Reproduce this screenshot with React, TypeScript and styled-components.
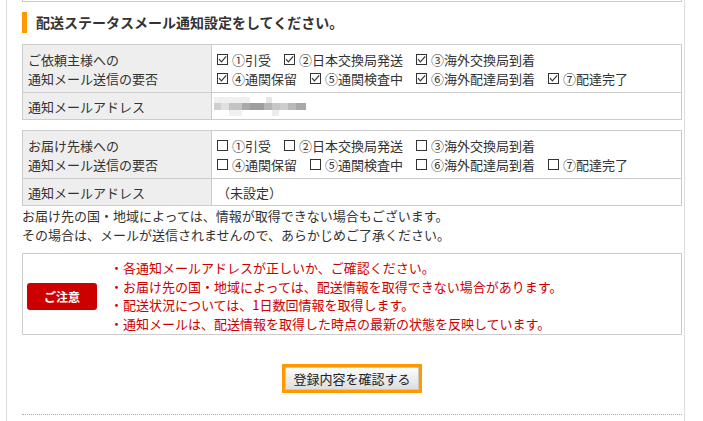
import React from 'react';
import styled, { createGlobalStyle } from 'styled-components';

const GlobalStyle = createGlobalStyle`
  *, *::before, *::after {
    box-sizing: border-box;
  }
  body {
    margin: 0;
    background: #fff;
    color: #333;
    font-family: "Noto Sans CJK JP", "Noto Sans", sans-serif;
    font-size: 13px;
  }
`;

const Page = styled.div`
  margin-left: 6px;
  width: 679px;
  min-height: 421px;
  padding: 0 2px 0 15px;
  border-left: 1px solid #ddd;
  border-right: 1px solid #ddd;
`;

const PrevBox = styled.div`
  height: 2px;
  border: 1px solid #ccc;
  border-top: none;
`;

const Heading = styled.h2`
  margin: 10px 0 11px;
  padding-left: 9px;
  border-left: 5px solid #f90;
  font-size: 14px;
  line-height: 21px;
  font-weight: bold;
  color: #333;
`;

const Table = styled.table`
  width: 100%;
  border-collapse: collapse;
  table-layout: fixed;
  & + & {
    margin-top: 10px;
  }
`;

const Th = styled.th<{ $tight?: boolean }>`
  width: 189px;
  background: #eee;
  border: 1px solid #ccc;
  text-align: left;
  font-weight: normal;
  line-height: 19px;
  padding: ${(p) => (p.$tight ? '4px 5px 3px' : '5px 5px 4px')};
  vertical-align: middle;
`;

const Td = styled.td<{ $tight?: boolean }>`
  border: 1px solid #ccc;
  line-height: 19px;
  padding: ${(p) => (p.$tight ? '4px 5px 3px' : '5px 5px 4px')};
  vertical-align: middle;
`;

const CheckLine = styled.div`
  display: flex;
  line-height: 19px;
  white-space: nowrap;
`;

const CheckItem = styled.span`
  display: inline-flex;
  align-items: center;
  margin-right: 13px;

  svg {
    margin-right: 4px;
    flex-shrink: 0;
  }
`;

const Mosaic = styled.svg`
  display: block;
  margin-left: -3px;
`;

const Notes = styled.p`
  margin: 0;
  line-height: 19px;
`;

const Caution = styled.div`
  margin-top: 9px;
  border: 1px solid #ccc;
  display: flex;
  align-items: center;
  padding: 5px 4px 1px;
`;

const Badge = styled.span`
  width: 70px;
  height: 27px;
  flex-shrink: 0;
  margin-right: 13px;
  border-radius: 3px;
  background: #c00;
  color: #fff;
  font-size: 12px;
  font-weight: bold;
  display: flex;
  align-items: center;
  justify-content: center;
`;

const CautionList = styled.ul`
  margin: 0;
  padding: 0;
  list-style: none;
  color: #c00;
  line-height: 18.6px;
`;

const ButtonRow = styled.div`
  margin-top: 29px;
  display: flex;
  justify-content: center;
`;

const ConfirmButton = styled.button`
  height: 29px;
  padding: 0 8px;
  border: 3px solid #f90;
  background: linear-gradient(#fff, #dcdcdc);
  box-shadow: inset 0 0 0 1px #c8c8c8;
  font-family: inherit;
  font-size: 13px;
  color: #222;
  cursor: pointer;
`;

const Dotted = styled.div`
  margin-top: 21px;
  border-top: 1px dotted #aaa;
`;

const Box = ({ checked }: { checked: boolean }) => (
  <svg width="11" height="11" viewBox="0 0 11 11">
    <rect x="0.5" y="0.5" width="10" height="10" fill="#fff" stroke="#333" />
    {checked && <path d="M2 5.2 L4.4 7.8 L9.2 2.4" fill="none" stroke="#333" strokeWidth="1.2" />}
  </svg>
);

const lines = [
  ['①引受', '②日本交換局発送', '③海外交換局到着'],
  ['④通関保留', '⑤通関検査中', '⑥海外配達局到着', '⑦配達完了'],
];

const Checks = ({ checked }: { checked: boolean }) => (
  <>
    {lines.map((line, i) => (
      <CheckLine key={i}>
        {line.map((label) => (
          <CheckItem key={label}>
            <Box checked={checked} />
            {label}
          </CheckItem>
        ))}
      </CheckLine>
    ))}
  </>
);

// blurred address, drawn as a mosaic
const tiles: [number, number, number, string][] = [
  [0, 0, 36, '#efefef'], [52, 0, 6, '#e6e6e6'],
  [0, 6, 7, '#cfcfcf'], [7, 6, 8, '#e0e0e0'], [15, 6, 13, '#c4c4c4'], [28, 6, 8, '#a9a9a9'],
  [36, 6, 14, '#9e9e9e'], [50, 6, 8, '#b5b5b5'], [58, 6, 8, '#c6c6c6'], [66, 6, 8, '#cdcdcd'],
  [74, 6, 8, '#b9b9b9'], [82, 6, 10, '#a8a8a8'],
  [15, 13, 13, '#f0f0f0'], [58, 13, 7, '#ececec'],
];

const Address = () => (
  <Mosaic width="95" height="19" viewBox="0 0 95 19">
    {tiles.map(([x, y, w, c], i) => (
      <rect key={i} x={x} y={y} width={w} height={y === 6 ? 7 : 6} fill={c} />
    ))}
  </Mosaic>
);

export default function App() {
  return (
    <>
      <GlobalStyle />
      <Page>
        <PrevBox />
        <Heading>配送ステータスメール通知設定をしてください。</Heading>

        <Table>
          <tbody>
            <tr>
              <Th>ご依頼主様への<br />通知メール送信の要否</Th>
              <Td><Checks checked /></Td>
            </tr>
            <tr>
              <Th $tight>通知メールアドレス</Th>
              <Td $tight><Address /></Td>
            </tr>
          </tbody>
        </Table>

        <Table>
          <tbody>
            <tr>
              <Th>お届け先様への<br />通知メール送信の要否</Th>
              <Td><Checks checked={false} /></Td>
            </tr>
            <tr>
              <Th $tight>通知メールアドレス</Th>
              <Td $tight>（未設定）</Td>
            </tr>
          </tbody>
        </Table>

        <Notes>
          お届け先の国・地域によっては、情報が取得できない場合もございます。<br />
          その場合は、メールが送信されませんので、あらかじめご了承ください。
        </Notes>

        <Caution>
          <Badge>ご注意</Badge>
          <CautionList>
            <li>・各通知メールアドレスが正しいか、ご確認ください。</li>
            <li>・お届け先の国・地域によっては、配送情報を取得できない場合があります。</li>
            <li>・配送状況については、1日数回情報を取得します。</li>
            <li>・通知メールは、配送情報を取得した時点の最新の状態を反映しています。</li>
          </CautionList>
        </Caution>

        <ButtonRow>
          <ConfirmButton type="button">登録内容を確認する</ConfirmButton>
        </ButtonRow>

        <Dotted />
      </Page>
    </>
  );
}
